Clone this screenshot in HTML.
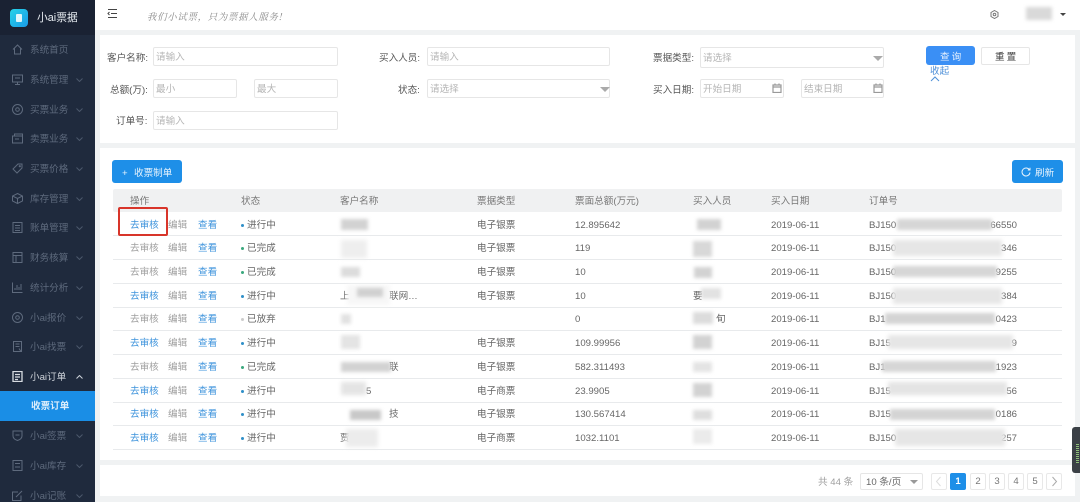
<!DOCTYPE html>
<html lang="zh">
<head>
<meta charset="utf-8">
<title>收票订单</title>
<style>
html,body{margin:0;padding:0;width:1080px;height:502px;overflow:hidden;background:#f0f2f3}
#w{position:relative;width:1080px;height:502px;overflow:hidden;background:#f0f2f3;font-family:"Liberation Sans","Noto Sans CJK SC",sans-serif;font-size:9.6px;color:#666;filter:blur(.35px)}
#w div,#w span,#w svg{position:absolute}
.t{white-space:nowrap;line-height:12px;height:12px;margin-top:2px}
.card{background:#fff}
#side{left:0;top:0;width:95px;height:502px;background:#1f2a3d}
.m{left:30px;color:#5e6a7d;font-size:9.6px;white-space:nowrap;line-height:12px;margin-top:2px}
.i{left:12px;width:11px;height:11px;fill:none;stroke:#5e6a7d;stroke-width:1}
.c{left:76px;width:7px;height:4px;fill:none;stroke:#4c586b;stroke-width:1}
.in{background:#fff;border:1px solid #e6e6e6;border-radius:2px;box-sizing:border-box}
.ph{color:#b5b5b5}
.l{color:#555}
.h{color:#777}
.b{color:#3f94dc}
.g{color:#a0a0a0}
.line{left:113px;width:949px;height:1px;background:#e8eaec}
.d{width:3px;height:3px;border-radius:50%}
.bl{background:#d2d2d2;filter:blur(1.8px)}
.wh{background:#f7f7f7;filter:blur(2.2px)}
.p{top:473px;height:17px;width:16px;box-sizing:border-box;border:1px solid #e8e8e8;border-radius:2px;background:#fff;text-align:center;line-height:15px;color:#777;font-size:9.6px}
</style>
</head>
<body>
<div id="w">

<!-- sidebar -->
<div id="side">
  <div style="left:0;top:0;width:95px;height:35px;background:#1a2233"></div>
  <div style="left:10px;top:9px;width:18px;height:18px;border-radius:4px;background:linear-gradient(135deg,#25d3e8,#1a9be8)"></div>
  <div style="left:16px;top:14px;width:6px;height:8px;border-radius:1px;background:#dff6fb"></div>
  <div class="t" style="left:37px;top:10px;color:#e8edf2;font-size:10.8px">小ai票据</div>

  <svg class="i" style="top:44px" viewBox="0 0 11 11"><path d="M1 5.500 5.500 1 10 5.500M2.500 4.500V10H8.500V4.500"/></svg>
  <div class="m" style="top:43px">系统首页</div>

  <svg class="i" style="top:74px" viewBox="0 0 11 11"><path d="M.5 1h10v7H.5zM5.500 8v2.500M3 10.500h5M3 4h5"/></svg>
  <div class="m" style="top:73px">系统管理</div>
  <svg class="c" style="top:78px" viewBox="0 0 7 4"><path d="M.5.5 3.500 3.500 6.500.5"/></svg>

  <svg class="i" style="top:104px" viewBox="0 0 11 11"><circle cx="5.500" cy="5.500" r="5"/><circle cx="5.500" cy="5.500" r="1.800"/></svg>
  <div class="m" style="top:103px">买票业务</div>
  <svg class="c" style="top:108px" viewBox="0 0 7 4"><path d="M.5.5 3.500 3.500 6.500.5"/></svg>

  <svg class="i" style="top:133px" viewBox="0 0 11 11"><path d="M.5 3h10v7H.5zM2.500 3V1h8v7M3 6h4"/></svg>
  <div class="m" style="top:132px">卖票业务</div>
  <svg class="c" style="top:137px" viewBox="0 0 7 4"><path d="M.5.5 3.500 3.500 6.500.5"/></svg>

  <svg class="i" style="top:163px" viewBox="0 0 11 11"><path d="M1 6 6 1h4v4l-5 5z"/><circle cx="7.800" cy="3.200" r=".6"/></svg>
  <div class="m" style="top:162px">买票价格</div>
  <svg class="c" style="top:167px" viewBox="0 0 7 4"><path d="M.5.5 3.500 3.500 6.500.5"/></svg>

  <svg class="i" style="top:193px" viewBox="0 0 11 11"><path d="M5.500.5 10.500 3v5l-5 2.500L.5 8V3zM.5 3l5 2.500L10.500 3M5.500 5.500v5"/></svg>
  <div class="m" style="top:192px">库存管理</div>
  <svg class="c" style="top:197px" viewBox="0 0 7 4"><path d="M.5.5 3.500 3.500 6.500.5"/></svg>

  <svg class="i" style="top:222px" viewBox="0 0 11 11"><path d="M1 .5h9v10H1zM3 3.500h5M3 6h5M3 8.500h5"/></svg>
  <div class="m" style="top:221px">账单管理</div>
  <svg class="c" style="top:226px" viewBox="0 0 7 4"><path d="M.5.5 3.500 3.500 6.500.5"/></svg>

  <svg class="i" style="top:252px" viewBox="0 0 11 11"><path d="M1 .5h9v10H1zM1 3.500h9M4 3.500v7"/></svg>
  <div class="m" style="top:251px">财务核算</div>
  <svg class="c" style="top:256px" viewBox="0 0 7 4"><path d="M.5.5 3.500 3.500 6.500.5"/></svg>

  <svg class="i" style="top:282px" viewBox="0 0 11 11"><path d="M.5.500v10h10M3 8V6M5 8V3M7 8V5M9 8V2"/></svg>
  <div class="m" style="top:281px">统计分析</div>
  <svg class="c" style="top:286px" viewBox="0 0 7 4"><path d="M.5.5 3.500 3.500 6.500.5"/></svg>

  <svg class="i" style="top:312px" viewBox="0 0 11 11"><circle cx="5.500" cy="5.500" r="5"/><circle cx="5.500" cy="5.500" r="1.800"/></svg>
  <div class="m" style="top:311px">小ai报价</div>
  <svg class="c" style="top:316px" viewBox="0 0 7 4"><path d="M.5.5 3.500 3.500 6.500.5"/></svg>

  <svg class="i" style="top:341px" viewBox="0 0 11 11"><path d="M1.500.5h8v10h-8zM3.500 3h4M3.500 5.500h4M7 7.500l2 3"/></svg>
  <div class="m" style="top:340px">小ai找票</div>
  <svg class="c" style="top:345px" viewBox="0 0 7 4"><path d="M.5.5 3.500 3.500 6.500.5"/></svg>

  <svg class="i" style="top:371px;stroke:#d8dce2;stroke-width:1.300" viewBox="0 0 11 11"><path d="M1 .5h9v10H1zM3 3.500h5M3 6h5M3 8.500h3"/></svg>
  <div class="m" style="top:370px;color:#cdd2d9">小ai订单</div>
  <svg class="c" style="top:375px;stroke:#cdd2d9" viewBox="0 0 7 4"><path d="M.5 3.500 3.500.5 6.500 3.500"/></svg>

  <div style="left:0;top:391px;width:95px;height:30px;background:#1a8ee6"></div>
  <div class="m" style="top:399px;left:31px;color:#dcedfb;font-weight:bold">收票订单</div>

  <svg class="i" style="top:430px" viewBox="0 0 11 11"><path d="M1 1h9v5q0 3-4.500 4.500Q1 9 1 6zM3.500 5h4"/></svg>
  <div class="m" style="top:429px">小ai签票</div>
  <svg class="c" style="top:434px" viewBox="0 0 7 4"><path d="M.5.5 3.500 3.500 6.500.5"/></svg>

  <svg class="i" style="top:460px" viewBox="0 0 11 11"><path d="M1 .5h9v10H1zM3 3.500h5M3 7h5"/></svg>
  <div class="m" style="top:459px">小ai库存</div>
  <svg class="c" style="top:464px" viewBox="0 0 7 4"><path d="M.5.5 3.500 3.500 6.500.5"/></svg>

  <svg class="i" style="top:490px" viewBox="0 0 11 11"><path d="M9 5.500v5H.5V2H6M4 7l6-6"/></svg>
  <div class="m" style="top:489px">小ai记账</div>
  <svg class="c" style="top:494px" viewBox="0 0 7 4"><path d="M.5.5 3.500 3.500 6.500.5"/></svg>
</div>

<!-- topbar -->
<div class="card" style="left:95px;top:0;width:985px;height:30px"></div>
<svg style="left:107px;top:8px;width:11px;height:11px;fill:none;stroke:#444;stroke-width:1" viewBox="0 0 11 11"><path d="M1 1.500h9M4 5.500h6M1 9.500h9M2.500 4 1 5.500 2.500 7"/></svg>
<div class="t" style="left:147px;top:8px;color:#8a8a8a;font-family:'Noto Serif CJK SC',serif;font-style:italic;font-size:9.4px;letter-spacing:.75px">我们小试票，只为票据人服务!</div>
<svg style="left:990px;top:10px;width:9px;height:9px;fill:none;stroke:#777;stroke-width:1" viewBox="0 0 9 9"><path d="M4.500.5 8 2.500v4l-3.500 2L1 6.500v-4z"/><circle cx="4.500" cy="4.500" r="1.300"/></svg>
<div class="bl" style="left:1026px;top:7px;width:26px;height:13px;background:#d9d9d9"></div>
<div style="left:1060px;top:13px;width:0;height:0;border:3px solid transparent;border-top:3px solid #444;border-bottom:0"></div>

<!-- search card -->
<div class="card" style="left:100px;top:35px;width:975px;height:108px"></div>
<div class="t l" style="left:107px;top:51px">客户名称:</div>
<div class="in" style="left:153px;top:47px;width:185px;height:19px"></div>
<div class="t ph" style="left:156px;top:50px">请输入</div>
<div class="t l" style="left:110px;top:83px">总额(万):</div>
<div class="in" style="left:153px;top:79px;width:84px;height:19px"></div>
<div class="t ph" style="left:156px;top:82px">最小</div>
<div class="in" style="left:254px;top:79px;width:84px;height:19px"></div>
<div class="t ph" style="left:257px;top:82px">最大</div>
<div class="t l" style="left:116px;top:114px">订单号:</div>
<div class="in" style="left:153px;top:111px;width:185px;height:19px"></div>
<div class="t ph" style="left:156px;top:114px">请输入</div>

<div class="t l" style="left:379px;top:51px">买入人员:</div>
<div class="in" style="left:427px;top:47px;width:183px;height:19px"></div>
<div class="t ph" style="left:430px;top:50px">请输入</div>
<div class="t l" style="left:398px;top:83px">状态:</div>
<div class="in" style="left:427px;top:79px;width:183px;height:19px"></div>
<div class="t ph" style="left:430px;top:82px">请选择</div>
<div style="left:600px;top:87px;width:0;height:0;border:5px solid transparent;border-top:5px solid #aaa;border-bottom:0"></div>

<div class="t l" style="left:653px;top:51px">票据类型:</div>
<div class="in" style="left:700px;top:47px;width:184px;height:21px"></div>
<div class="t ph" style="left:703px;top:51px">请选择</div>
<div style="left:873px;top:56px;width:0;height:0;border:5px solid transparent;border-top:5px solid #aaa;border-bottom:0"></div>
<div class="t l" style="left:653px;top:83px">买入日期:</div>
<div class="in" style="left:700px;top:79px;width:84px;height:19px"></div>
<div class="t ph" style="left:703px;top:82px">开始日期</div>
<svg style="left:772px;top:83px;width:10px;height:10px;fill:none;stroke:#999;stroke-width:1.200" viewBox="0 0 10 10"><path d="M1 2h8v7.500H1zM1 4h8M3 .5v2M7 .5v2"/></svg>
<div class="in" style="left:801px;top:79px;width:83px;height:19px"></div>
<div class="t ph" style="left:804px;top:82px">结束日期</div>
<svg style="left:873px;top:83px;width:10px;height:10px;fill:none;stroke:#999;stroke-width:1.200" viewBox="0 0 10 10"><path d="M1 2h8v7.500H1zM1 4h8M3 .5v2M7 .5v2"/></svg>

<div style="left:926px;top:46px;width:49px;height:19px;background:#3a8ff5;border-radius:3px"></div>
<div class="t" style="left:940px;top:50px;color:#e8f2fe;letter-spacing:2px">查询</div>
<div class="in" style="left:981px;top:47px;width:49px;height:18px"></div>
<div class="t" style="left:995px;top:50px;color:#444;letter-spacing:2px">重置</div>
<div class="t" style="left:930px;top:64px;color:#4f90d8">收起</div>
<svg style="left:930px;top:76px;width:10px;height:6px;fill:none;stroke:#4f90d8;stroke-width:1" viewBox="0 0 10 6"><path d="M1 5 5 1l4 4"/></svg>

<!-- table card -->
<div class="card" style="left:100px;top:148px;width:975px;height:312px"></div>
<div style="left:112px;top:160px;width:70px;height:23px;background:#1e8fe8;border-radius:3px"></div>
<div class="t" style="left:122px;top:166px;color:#e6f3fd">+</div>
<div class="t" style="left:134px;top:166px;color:#e6f3fd">收票制单</div>
<div style="left:1012px;top:160px;width:51px;height:23px;background:#1e8fe8;border-radius:3px"></div>
<svg style="left:1021px;top:167px;width:10px;height:10px;fill:none;stroke:#e6f3fd;stroke-width:1" viewBox="0 0 10 10"><path d="M8.500 3A4 4 0 1 0 9 5.500M9 .8V3H6.800"/></svg>
<div class="t" style="left:1035px;top:166px;color:#e6f3fd">刷新</div>

<div style="left:113px;top:189px;width:949px;height:23px;background:#f0f1f2;border-radius:2px"></div>
<div class="t h" style="left:130px;top:194px">操作</div>
<div class="t h" style="left:241px;top:194px">状态</div>
<div class="t h" style="left:340px;top:194px">客户名称</div>
<div class="t h" style="left:477px;top:194px">票据类型</div>
<div class="t h" style="left:575px;top:194px">票面总额(万元)</div>
<div class="t h" style="left:693px;top:194px">买入人员</div>
<div class="t h" style="left:771px;top:194px">买入日期</div>
<div class="t h" style="left:869px;top:194px">订单号</div>

<div class="line" style="top:235px"></div>
<div class="line" style="top:259px"></div>
<div class="line" style="top:283px"></div>
<div class="line" style="top:307px"></div>
<div class="line" style="top:330px"></div>
<div class="line" style="top:354px"></div>
<div class="line" style="top:378px"></div>
<div class="line" style="top:402px"></div>
<div class="line" style="top:425px"></div>
<div class="line" style="top:449px"></div>

<!-- row 1 -->
<div class="t b" style="left:130px;top:218px">去审核</div><div class="t g" style="left:168px;top:218px">编辑</div><div class="t b" style="left:198px;top:218px">查看</div>
<div class="d" style="left:241px;top:224px;background:#2f8fc8"></div><div class="t" style="left:247px;top:218px">进行中</div>
<div class="t" style="left:477px;top:218px">电子银票</div><div class="t" style="left:575px;top:218px">12.895642</div><div class="t" style="left:771px;top:218px">2019-06-11</div><div class="t" style="left:869px;top:218px">BJ150</div><div class="t" style="right:63px;top:218px">66550</div>
<!-- row 2 -->
<div class="t g" style="left:130px;top:241px">去审核</div><div class="t g" style="left:168px;top:241px">编辑</div><div class="t b" style="left:198px;top:241px">查看</div>
<div class="d" style="left:241px;top:247px;background:#3aa87d"></div><div class="t" style="left:247px;top:241px">已完成</div>
<div class="t" style="left:477px;top:241px">电子银票</div><div class="t" style="left:575px;top:241px">119</div><div class="t" style="left:771px;top:241px">2019-06-11</div><div class="t" style="left:869px;top:241px">BJ150</div><div class="t" style="right:63px;top:241px">346</div>
<!-- row 3 -->
<div class="t g" style="left:130px;top:265px">去审核</div><div class="t g" style="left:168px;top:265px">编辑</div><div class="t b" style="left:198px;top:265px">查看</div>
<div class="d" style="left:241px;top:271px;background:#3aa87d"></div><div class="t" style="left:247px;top:265px">已完成</div>
<div class="t" style="left:477px;top:265px">电子银票</div><div class="t" style="left:575px;top:265px">10</div><div class="t" style="left:771px;top:265px">2019-06-11</div><div class="t" style="left:869px;top:265px">BJ150</div><div class="t" style="right:63px;top:265px">9255</div>
<!-- row 4 -->
<div class="t b" style="left:130px;top:289px">去审核</div><div class="t g" style="left:168px;top:289px">编辑</div><div class="t b" style="left:198px;top:289px">查看</div>
<div class="d" style="left:241px;top:295px;background:#2f8fc8"></div><div class="t" style="left:247px;top:289px">进行中</div>
<div class="t" style="left:340px;top:289px">上</div><div class="t" style="left:389px;top:289px">联网…</div>
<div class="t" style="left:477px;top:289px">电子银票</div><div class="t" style="left:575px;top:289px">10</div><div class="t" style="left:693px;top:289px">要</div><div class="t" style="left:771px;top:289px">2019-06-11</div><div class="t" style="left:869px;top:289px">BJ150</div><div class="t" style="right:63px;top:289px">384</div>
<!-- row 5 -->
<div class="t g" style="left:130px;top:312px">去审核</div><div class="t g" style="left:168px;top:312px">编辑</div><div class="t b" style="left:198px;top:312px">查看</div>
<div class="d" style="left:241px;top:318px;background:#ccc"></div><div class="t" style="left:247px;top:312px">已放弃</div>
<div class="t" style="left:575px;top:312px">0</div><div class="t" style="left:771px;top:312px">2019-06-11</div><div class="t" style="left:869px;top:312px">BJ1</div><div class="t" style="right:63px;top:312px">0423</div>
<!-- row 6 -->
<div class="t b" style="left:130px;top:336px">去审核</div><div class="t g" style="left:168px;top:336px">编辑</div><div class="t b" style="left:198px;top:336px">查看</div>
<div class="d" style="left:241px;top:342px;background:#2f8fc8"></div><div class="t" style="left:247px;top:336px">进行中</div>
<div class="t" style="left:477px;top:336px">电子银票</div><div class="t" style="left:575px;top:336px">109.99956</div><div class="t" style="left:771px;top:336px">2019-06-11</div><div class="t" style="left:869px;top:336px">BJ15</div><div class="t" style="right:63px;top:336px">9</div>
<!-- row 7 -->
<div class="t g" style="left:130px;top:360px">去审核</div><div class="t g" style="left:168px;top:360px">编辑</div><div class="t b" style="left:198px;top:360px">查看</div>
<div class="d" style="left:241px;top:366px;background:#3aa87d"></div><div class="t" style="left:247px;top:360px">已完成</div>
<div class="t" style="left:389px;top:360px">联</div>
<div class="t" style="left:477px;top:360px">电子银票</div><div class="t" style="left:575px;top:360px">582.311493</div><div class="t" style="left:771px;top:360px">2019-06-11</div><div class="t" style="left:869px;top:360px">BJ1</div><div class="t" style="right:63px;top:360px">1923</div>
<!-- row 8 -->
<div class="t b" style="left:130px;top:384px">去审核</div><div class="t g" style="left:168px;top:384px">编辑</div><div class="t b" style="left:198px;top:384px">查看</div>
<div class="d" style="left:241px;top:390px;background:#2f8fc8"></div><div class="t" style="left:247px;top:384px">进行中</div>
<div class="t" style="left:366px;top:384px">5</div>
<div class="t" style="left:477px;top:384px">电子商票</div><div class="t" style="left:575px;top:384px">23.9905</div><div class="t" style="left:771px;top:384px">2019-06-11</div><div class="t" style="left:869px;top:384px">BJ15</div><div class="t" style="right:63px;top:384px">56</div>
<!-- row 9 -->
<div class="t b" style="left:130px;top:407px">去审核</div><div class="t g" style="left:168px;top:407px">编辑</div><div class="t b" style="left:198px;top:407px">查看</div>
<div class="d" style="left:241px;top:413px;background:#2f8fc8"></div><div class="t" style="left:247px;top:407px">进行中</div>
<div class="t" style="left:389px;top:407px">技</div>
<div class="t" style="left:477px;top:407px">电子银票</div><div class="t" style="left:575px;top:407px">130.567414</div><div class="t" style="left:771px;top:407px">2019-06-11</div><div class="t" style="left:869px;top:407px">BJ15</div><div class="t" style="right:63px;top:407px">0186</div>
<!-- row 10 -->
<div class="t b" style="left:130px;top:431px">去审核</div><div class="t g" style="left:168px;top:431px">编辑</div><div class="t b" style="left:198px;top:431px">查看</div>
<div class="d" style="left:241px;top:437px;background:#2f8fc8"></div><div class="t" style="left:247px;top:431px">进行中</div>
<div class="t" style="left:340px;top:431px">贾</div>
<div class="t" style="left:477px;top:431px">电子商票</div><div class="t" style="left:575px;top:431px">1032.1101</div><div class="t" style="left:771px;top:431px">2019-06-11</div><div class="t" style="left:869px;top:431px">BJ150</div><div class="t" style="right:63px;top:431px">257</div>

<!-- blur blobs: customer -->
<div class="bl" style="left:341px;top:219px;width:27px;height:11px"></div>
<div class="wh" style="left:341px;top:240px;width:26px;height:18px;background:#eee"></div>
<div class="bl" style="left:341px;top:267px;width:19px;height:10px;background:#dcdcdc"></div>
<div class="wh" style="left:347px;top:285px;width:43px;height:20px"></div>
<div class="bl" style="left:357px;top:288px;width:26px;height:9px;background:#d0d0d0"></div>
<div class="bl" style="left:341px;top:314px;width:10px;height:10px;background:#e2e2e2"></div>
<div class="bl" style="left:341px;top:335px;width:19px;height:14px;background:#e4e4e4"></div>
<div class="bl" style="left:341px;top:362px;width:50px;height:10px"></div>
<div class="wh" style="left:341px;top:382px;width:25px;height:13px;background:#e4e4e4"></div>
<div class="bl" style="left:350px;top:410px;width:31px;height:10px;background:#c8c8c8"></div>
<div class="wh" style="left:346px;top:429px;width:32px;height:18px;background:#ececec"></div>
<!-- buyer -->
<div class="bl" style="left:697px;top:219px;width:24px;height:11px"></div>
<div class="bl" style="left:693px;top:241px;width:19px;height:16px;background:#d8d8d8"></div>
<div class="bl" style="left:694px;top:267px;width:18px;height:11px"></div>
<div class="bl" style="left:701px;top:288px;width:20px;height:11px;background:#e2e2e2"></div>
<div class="bl" style="left:693px;top:312px;width:20px;height:12px;background:#dcdcdc"></div>
<div class="t" style="left:716px;top:312px">旬</div>
<div class="bl" style="left:693px;top:335px;width:19px;height:14px"></div>
<div class="bl" style="left:693px;top:362px;width:19px;height:10px;background:#e4e4e4"></div>
<div class="bl" style="left:693px;top:383px;width:19px;height:14px"></div>
<div class="bl" style="left:693px;top:410px;width:19px;height:10px;background:#dedede"></div>
<div class="bl" style="left:693px;top:429px;width:19px;height:15px;background:#ebebeb"></div>
<!-- order no -->
<div class="bl" style="left:897px;top:219px;width:95px;height:11px;background:#d6d6d6"></div>
<div class="wh" style="left:893px;top:240px;width:109px;height:16px;background:#e6e6e6"></div>
<div class="bl" style="left:893px;top:266px;width:104px;height:11px;background:#d6d6d6"></div>
<div class="wh" style="left:893px;top:288px;width:109px;height:16px;background:#e6e6e6"></div>
<div class="bl" style="left:885px;top:313px;width:110px;height:11px;background:#d4d4d4"></div>
<div class="wh" style="left:888px;top:335px;width:125px;height:14px;background:#e6e6e6"></div>
<div class="bl" style="left:882px;top:361px;width:114px;height:11px;background:#d6d6d6"></div>
<div class="wh" style="left:888px;top:382px;width:119px;height:13px;background:#e4e4e4"></div>
<div class="bl" style="left:890px;top:409px;width:105px;height:11px;background:#d4d4d4"></div>
<div class="wh" style="left:895px;top:429px;width:110px;height:17px;background:#e6e6e6"></div>

<!-- red highlight -->
<div style="left:118px;top:207px;width:50px;height:29px;box-sizing:border-box;border:2px solid #d8352a;border-radius:2px"></div>

<!-- pagination card -->
<div class="card" style="left:100px;top:465px;width:975px;height:31px"></div>
<div class="t g" style="left:818px;top:475px">共 44 条</div>
<div class="in" style="left:860px;top:473px;width:63px;height:17px"></div>
<div class="t" style="left:866px;top:475px">10 条/页</div>
<div style="left:910px;top:480px;width:0;height:0;border:4px solid transparent;border-top:4px solid #999;border-bottom:0"></div>
<div class="p" style="left:931px"></div>
<svg style="left:935px;top:476px;width:7px;height:11px;fill:none;stroke:#ddd" viewBox="0 0 7 11"><path d="M5.500 1 1.500 5.500 5.500 10"/></svg>
<div class="p" style="left:950px;background:#1e8fe8;border-color:#1e8fe8;color:#fff;font-weight:bold">1</div>
<div class="p" style="left:970px">2</div>
<div class="p" style="left:989px">3</div>
<div class="p" style="left:1008px">4</div>
<div class="p" style="left:1027px">5</div>
<div class="p" style="left:1046px"></div>
<svg style="left:1051px;top:476px;width:7px;height:11px;fill:none;stroke:#aaa" viewBox="0 0 7 11"><path d="M1.500 1 5.500 5.500 1.500 10"/></svg>

<!-- side widget -->
<div style="left:1072px;top:427px;width:10px;height:46px;background:#3b4046;border-radius:3px 0 0 3px"></div>
<div style="left:1076px;top:444px;width:3px;height:20px;background:repeating-linear-gradient(to bottom,#8fbf7a 0,#8fbf7a 1px,#3b4046 1px,#3b4046 2px)"></div>

</div>
</body>
</html>
